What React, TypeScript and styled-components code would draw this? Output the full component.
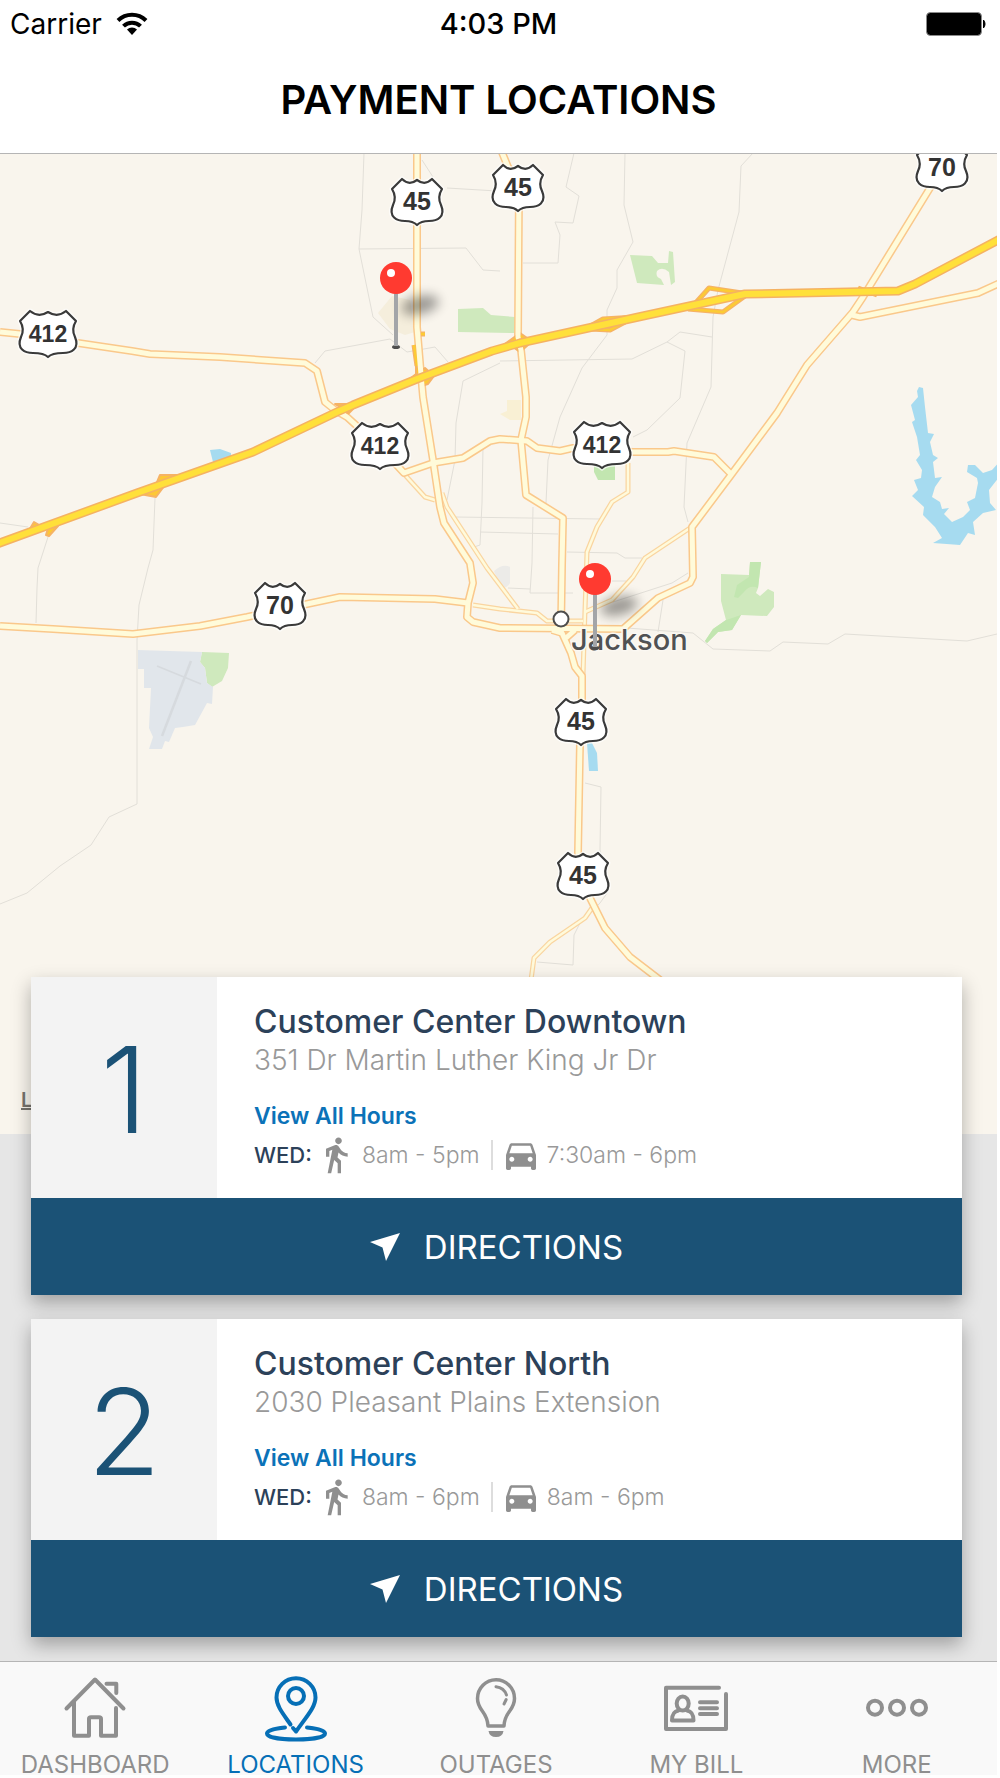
import React from 'react';
import styled, { createGlobalStyle } from 'styled-components';
import { MdDirectionsCar, MdDirectionsWalk } from 'react-icons/md';

const color = {
  navy: '#2c4159',
  brand: '#1b5276',
  link: '#0b72b8',
  muted: '#999999',
  icon: '#8f8f8f',
  hairline: '#b5b5b5',
};

const GlobalStyle = createGlobalStyle`
  *, *::before, *::after { box-sizing: border-box; }
  body {
    margin: 0;
    padding: 0 3px 3px 0;
    background: #ffffff;
    font-family: Inter, Roboto, sans-serif;
  }
`;

const Screen = styled.div`
  display: flex;
  flex-direction: column;
  min-height: calc(100vh - 3px);
  background: #e6e6e6;
`;

const Header = styled.header`
  background: #ffffff;
  border-bottom: 1px solid ${color.hairline};
`;

const StatusBar = styled.div`
  display: grid;
  grid-template-columns: 1fr auto 1fr;
  align-items: center;
  height: 48px;
  padding: 0 10px;
  font-size: 28px;
  line-height: 34px;
  color: #000000;
`;

const Carrier = styled.div`
  display: flex;
  align-items: center;
  gap: 14px;
`;

const Clock = styled.time`
  font-size: 29px;
  font-weight: 500;
`;

const BatterySlot = styled.div`
  display: flex;
  justify-content: flex-end;
`;

const ScreenTitle = styled.h1`
  margin: 0;
  padding: 28px 0 29px;
  font-size: 40px;
  font-weight: 600;
  line-height: 48px;
  text-align: center;
  color: #000000;
`;

const MapArea = styled.section`
  position: relative;
  height: 980px;
  background: #f9f5ed;
`;

const MapCanvas = styled.svg`
  display: block;
  width: 100%;
  height: 100%;
`;

const Legal = styled.a`
  position: absolute;
  left: 21px;
  bottom: 20px;
  font-size: 20px;
  font-weight: 600;
  line-height: 28px;
  color: #76736d;
`;

const CardList = styled.main`
  position: relative;
  display: flex;
  flex-direction: column;
  flex: 1;
  gap: 24px;
  margin-top: -157px;
  padding: 0 35px 24px 31px;
`;

const Card = styled.article`
  background: #ffffff;
  box-shadow: 0 8px 18px rgba(0, 0, 0, 0.3);
`;

const CardBody = styled.div`
  display: grid;
  grid-template-columns: 186px 1fr;
  min-height: 221px;
`;

const CardNumber = styled.div`
  display: flex;
  align-items: center;
  justify-content: center;
  padding-top: 4px;
  background: #f3f3f3;
  color: ${color.brand};
  font-size: 120px;
  font-weight: 300;
  line-height: 148px;
`;

const CardInfo = styled.div`
  display: flex;
  flex-direction: column;
  align-items: flex-start;
  padding: 26px 24px 22px 37px;
`;

const PlaceName = styled.h2`
  margin: 0;
  font-size: 32px;
  font-weight: 500;
  line-height: 38px;
  color: ${color.navy};
`;

const Address = styled.p`
  margin: 0 0 22px;
  font-size: 28px;
  font-weight: 300;
  line-height: 38px;
  color: ${color.muted};
`;

const HoursLink = styled.a`
  margin-bottom: 4px;
  font-size: 23px;
  font-weight: 600;
  line-height: 30px;
  color: ${color.link};
  text-decoration: none;
`;

const HoursRow = styled.div`
  display: flex;
  align-items: center;
  font-size: 23px;
  line-height: 40px;
  color: ${color.muted};
  svg { color: ${color.icon}; flex: none; }
`;

const Day = styled.span`
  margin-right: 4px;
  font-size: 22px;
  font-weight: 500;
  color: ${color.navy};
`;

const Hours = styled.span`
  display: flex;
  align-items: center;
  gap: 6px;
  font-weight: 300;
  & + & {
    margin-left: 11px;
    padding-left: 10px;
    background: linear-gradient(#dddddd, #dddddd) left center / 2px 30px no-repeat;
  }
`;

const DirectionsButton = styled.button`
  display: flex;
  align-items: center;
  justify-content: center;
  gap: 24px;
  width: 100%;
  height: 97px;
  padding: 0;
  border: 0;
  background: ${color.brand};
  color: #ffffff;
  font-family: inherit;
  font-size: 33px;
  font-weight: 400;
  cursor: pointer;
`;

const TabBar = styled.nav`
  position: relative;
  border-top: 1px solid ${color.hairline};
  background: #f9f9f9;
`;

const TabList = styled.div`
  display: grid;
  grid-template-columns: repeat(5, 1fr);
  margin-left: -5px;
`;

const Tab = styled.a<{ $active?: boolean }>`
  display: flex;
  flex-direction: column;
  align-items: center;
  gap: 13px;
  padding-top: 12px;
  font-size: 24px;
  font-weight: 400;
  line-height: 20px;
  text-decoration: none;
  color: ${(p) => (p.$active ? '#066fb6' : color.icon)};
`;

/* ---------- status bar drawings ---------- */

const WifiIcon = () => (
  <svg width="32" height="24" viewBox="0 0 32 24" aria-label="Wi-Fi">
    <g fill="none" stroke="#000" strokeWidth="4">
      <path d="M2 8.5a20 20 0 0 1 28 0" />
      <path d="M7.500 14.200a12 12 0 0 1 17 0" />
    </g>
    <path d="M11 17.500a7.200 7.200 0 0 1 10 0L16 23z" />
  </svg>
);

const BatteryIcon = () => (
  <svg width="61" height="24" viewBox="0 0 61 24" aria-label="Battery full">
    <rect x="0.500" y="0.500" width="55" height="23" rx="4" fill="#000" stroke="#8b8b8b" />
    <path d="M57.500 8a6 6 0 0 1 0 8z" stroke="#000" />
  </svg>
);

const ArrowIcon = () => (
  <svg width="30" height="28" viewBox="0 0 30 28" aria-hidden="true">
    <path d="M30 0L0 9l12.500 5.500L16 28z" fill="#fff" />
  </svg>
);

/* ---------- map ---------- */

const MINOR = [
  'M364 153L362 210L359 249L373 317L393 335',
  'M359 249L466 248L483 270L500 271',
  'M422 160L433 177M447 188L497 191',
  'M315 363L325 351L390 339L407 352L435 347L448 362',
  'M500 363L463 381L456 423L455 460L447 500',
  'M483 447L482 503L480 545L474 547',
  'M455 517L600 519M480 532L558 534',
  'M0 523L28 527',
  'M48 537L38 568L37 588L36 623',
  'M155 498L153 550L148 568L139 605L137 640L137 804L109 817L91 845L60 866L27 893L0 904',
  'M574 153L566 187L579 196L573 223L555 222L560 235L558 263L523 263',
  'M625 153L624 205L633 242L617 270L617 288L607 310L607 335L582 368L560 417L548 460L546 503',
  'M533 507L532 563L530 593L573 593',
  'M753 153L741 166L739 212L718 290L713 317L711 387L687 443L684 507L688 522',
  'M500 361L632 359L667 342L680 332L712 337',
  'M667 342L685 351L680 398L647 430L633 437',
  'M567 552L617 553L625 558L642 558M508 588L530 589M612 581L626 581',
  'M613 602L672 583L688 573M663 600L658 632',
  'M627 628L693 633L713 649L770 651L783 642L828 644L845 634L967 641L997 634',
  'M585 783L601 787L600 850L608 880V892L600 903L579 925L574 935L573 965L537 962',
];

const THIN_ROADS = [
  'M405 475L425 497L435 500',
  'M442 493L447 507L487 568L518 609',
  'M473 605L500 609L537 613L547 621L583 621',
  'M628 463L628 492L612 502L597 527L587 552L585 610L583 675',
  'M690 528L645 558L633 577L612 600L585 612',
  'M592 908L585 918L550 942L534 958L531 980',
];

const ROADS = [
  'M0 332L20 334L78 343L132 351L150 354L220 357L305 363L317 371L325 402L335 410L347 417L380 447L404 473L433 463L463 458L490 441L500 439L527 441L537 448L560 451L573 448L633 452L668 452L674 451L714 457L731 474',
  'M417 150L417 327L420 363L423 397L433 460L440 507L444 523L470 563L473 583L468 603L467 617L473 622L500 628L623 629L658 598L690 583L693 577L692 527L731 475L777 413L807 365L853 312L863 297L930 188L942 170',
  'M852 315L860 317L978 293L1000 283',
  'M501 150L508 167L519 187L518 337L521 350L526 397L526 417L521 440L526 495L563 518L562 565L561 629',
  'M552 630L562 633L571 653L575 667L582 676L582 700L580 743L578 853L590 898L605 928L630 957L660 980',
  'M575 630L566 638',
  'M0 626L53 629L133 634L200 626L247 617L307 604L340 597L435 599L468 603',
];

/* interchanges drawn as solid blocks, and those drawn as open ramps */
const JUNCTIONS = [
  'M28 532L34 522L41 526ZM46 535L49 536L58 526L50 522Z',
  'M155 487L160 475L180 475ZM140 494L156 497L165 485Z',
  'M335 404L357 404L345 410ZM347 415L357 405L347 408Z',
  'M405 383L416 374V360L421 376ZM421 386L428 384L434 376L425 368L418 374Z',
  'M502 346L520 333L530 340ZM513 347L520 352L528 345Z',
];

const RAMPS = [
  'M421 334H425M414 345L417 366',
  'M587 328L603 319L637 317M590 329L610 330L625 322',
  'M693 306L709 288L742 293M688 309L723 312L745 296',
  'M858 288L877 295',
];

const HIGHWAY =
  'M-3 544L137 493L253 452L337 412L353 405L417 379L492 351L520 343L643 316L745 294L898 291L915 284L1000 239';

const LAKE =
  'M919 387L923 388L925 407L928 433L934 434L930 442L933 455L938 458L933 462L935 478L942 477L935 487L932 497L940 502L942 509L949 508L944 514L952 522L963 517L970 510L967 502L975 498L978 483L977 478L967 472L968 465L975 465L983 473L992 470L1000 461V476L989 490L990 503L996 510L983 513L973 522L975 535L968 533L960 545L933 543L942 538L935 527L923 515L924 507L912 496L918 490L914 480L921 478L922 470L916 460L920 455L917 437L912 422L915 420L911 405L918 397L917 391Z';

const SHIELDS = [
  { x: 417, y: 178, route: '45' },
  { x: 518, y: 164, route: '45' },
  { x: 942, y: 144, route: '70' },
  { x: 48, y: 310, route: '412' },
  { x: 380, y: 422, route: '412' },
  { x: 602, y: 421, route: '412' },
  { x: 280, y: 582, route: '70' },
  { x: 581, y: 698, route: '45' },
  { x: 583, y: 852, route: '45' },
];

const Shield = ({ x, y, route }: { x: number; y: number; route: string }) => {
  const wide = route.length > 2;
  const s = wide ? 3 : 0;
  const d =
    `M${-15 - s} 1Q${-8 - s / 2} 8 0 2Q${8 + s / 2} 8 ${15 + s} 1L${25 + s} 11` +
    `Q${20 + s} 19 ${24 + s} 27C${29 + s} 39 ${20 + s} 43 ${12 + s} 43Q4 43 0 47` +
    `Q-4 43 ${-12 - s} 43C${-20 - s} 43 ${-29 - s} 39 ${-24 - s} 27Q${-20 - s} 19 ${-25 - s} 11Z`;
  return (
    <g transform={`translate(${x} ${y})`}>
      <path d={d} fill="#fff" stroke="#fff" strokeWidth="5" strokeLinejoin="round" opacity="0.700" />
      <path d={d} fill="#fff" stroke="#3a3a3a" strokeWidth="2.200" strokeLinejoin="round" />
      <text
        y="32"
        textAnchor="middle"
        fontFamily="'Liberation Sans', Arial, sans-serif"
        fontWeight="700"
        fontSize={wide ? 23 : 25}
        fill="#333"
      >
        {route}
      </text>
    </g>
  );
};

const Pin = ({ x, y }: { x: number; y: number }) => (
  <g transform={`translate(${x} ${y})`}>
    <ellipse cx="24" cy="27" rx="19" ry="9" transform="rotate(-14 24 27)" fill="#000" opacity="0.380" filter="url(#soft)" />
    <ellipse cy="69" rx="4" ry="2" fill="#4d4d4d" />
    <path d="M0 14V68" stroke="#a3a5a8" strokeWidth="4" />
    <circle r="16" fill="#ff3a30" />
    <circle cx="-5" cy="-5" r="4" fill="#fff" />
  </g>
);

const LocationsMap = () => (
  <MapCanvas viewBox="0 154 997 980" preserveAspectRatio="xMidYMin slice" role="img" aria-label="Map of Jackson">
    <defs>
      <filter id="soft" x="-60%" y="-120%" width="220%" height="340%">
        <feGaussianBlur stdDeviation="6" />
      </filter>
    </defs>
    <g fill="#f5eedc">
      <path d="M378 313L392 296L410 300L415 332L405 335L390 329Z" />
      <path d="M507 400H521V420H510L500 414L507 411Z" fill="#f9f0d4" />
      <path d="M494 571Q503 563 510 567V583Q506 590 500 586Z" fill="#ecebe8" />
    </g>
    <g fill="#cfe9bd">
      <path d="M458 309L483 308L491 315L515 317V333L458 332Z" />
      <path d="M630 255L652 256L658 263L668 263L669 251L673 252L675 282L671 285L669 272Q662 266 657 271Q655 277 661 279L664 285L637 283Z" />
      <path d="M721 574L749 575L750 562H761L758 588L756 593L760 596L768 589L774 592V607L767 616L741 615L732 630L718 632L707 643L705 641L713 629L726 620L721 601Z" />
      <path d="M202 652L229 653L228 668L222 681L212 687L207 683L205 668L200 662Z" />
    </g>
    <g fill="#c2e6b0">
      <path d="M594 465H615V480H598L594 472Z" />
      <path d="M750 562H761L758 588Q750 584 744 592L738 598L734 597L737 585L749 577Z" />
      <path d="M741 615L732 630L718 632L707 643L705 641L713 629L726 620Z" />
    </g>
    <path
      d="M138 650L202 652L200 662L205 668L207 683L213 687L212 704L207 703L195 725L183 727L175 728L169 742L165 741L162 749H149L153 737L149 728L151 688H144V669H138Z"
      fill="#e1e6eb"
    />
    <path d="M157 666L201 684" stroke="#d6dade" strokeWidth="1.500" />
    <path d="M191 661L162 736" stroke="#d6dade" strokeWidth="2.500" />
    <g fill="#a6dbf0">
      <path d="M210 450L220 449L231 453V457L213 462Z" />
      <path d="M587 743H592L597 753L598 771H589Z" />
      <path d={LAKE} />
    </g>
    <g fill="none" stroke="#e2dfd8" strokeWidth="1">
      {MINOR.map((d) => <path key={d} d={d} />)}
    </g>
    <g fill="none" strokeLinejoin="round">
      {THIN_ROADS.map((d) => <path key={d} d={d} stroke="#fad5a0" strokeWidth="5" />)}
      {THIN_ROADS.map((d) => <path key={d + 'f'} d={d} stroke="#fffadb" strokeWidth="2.500" />)}
      {ROADS.map((d) => <path key={d} d={d} stroke="#fac88b" strokeWidth="8" />)}
      {JUNCTIONS.map((d) => <path key={d} d={d} fill="#fdc835" stroke="#f6b365" strokeWidth="2" />)}
      {RAMPS.map((d) => <path key={d} d={d} stroke="#f6b365" strokeWidth="5" />)}
      {RAMPS.map((d) => <path key={d + 'f'} d={d} stroke="#fccb34" strokeWidth="2.500" />)}
      {ROADS.map((d) => <path key={d + 'f'} d={d} stroke="#fffbda" strokeWidth="5" />)}
      <path d={HIGHWAY} stroke="#f5b262" strokeWidth="9" />
      <path d={HIGHWAY} stroke="#ffe03a" strokeWidth="6" />
    </g>
    <circle cx="561" cy="619" r="7.500" fill="#fff" stroke="#4d4d4d" strokeWidth="2" />
    <text
      x="571"
      y="650"
      fontFamily="Inter, sans-serif"
      fontSize="29"
      fontWeight="500"
      fill="#505153"
      stroke="#fbf8f2"
      strokeWidth="3"
      paintOrder="stroke"
    >
      Jackson
    </text>
    {SHIELDS.map((s) => <Shield key={`${s.x}-${s.y}`} {...s} />)}
    <Pin x={396} y={278} />
    <Pin x={595} y={579} />
  </MapCanvas>
);

/* ---------- tab icons ---------- */

const TabIcon = ({ children }: { children: React.ReactNode }) => (
  <svg
    width="64"
    height="68"
    viewBox="0 0 64 68"
    fill="none"
    stroke="currentColor"
    strokeWidth="4"
    strokeLinecap="round"
    strokeLinejoin="round"
    aria-hidden="true"
  >
    {children}
  </svg>
);

const HomeIcon = () => (
  <TabIcon>
    <path d="M3.500 34.500L32 5.500L60.500 34.500" />
    <path d="M43.500 9.700H53.300V19" />
    <path d="M11 28V61.700H26V45Q26 43.300 28 43.300H36Q38 43.300 38 45V61.700H53V34" />
  </TabIcon>
);

const PlaceIcon = () => (
  <TabIcon>
    <path d="M26.500 50.500C20 41 12.500 32.500 12.500 23.500A19.500 19.200 0 0 1 51.500 23.500C51.500 33 43 42 32 57.500L29 54" />
    <circle cx="32" cy="22" r="8" />
    <path d="M21 53.500C10 54.500 3 56.500 3 59.500C3 63 15 65.500 32 65.500S61 63 61 59.500C61 56.500 54 54.500 43 53.500" />
  </TabIcon>
);

const BulbIcon = () => (
  <TabIcon>
    <path d="M24 52C23.500 37 13.500 37 13.500 24.500A18.500 18.800 0 0 1 50.500 24.500C50.500 37 40.500 37 40 52Z" strokeWidth="3.500" />
    <path d="M32 12.700Q40 13.500 42.500 21M42.200 25.500L40 30" strokeWidth="3" />
    <path d="M24.500 57H39.500Q38.500 63 32 63T24.500 57Z" fill="currentColor" stroke="none" />
  </TabIcon>
);

const BillIcon = () => (
  <TabIcon>
    <path d="M55 13.700H2V55H62V20" />
    <ellipse cx="18.700" cy="29.500" rx="6" ry="7" />
    <path d="M14.500 36.500C10 37.500 8 40 8 46.500H29.500C29.500 40 27.500 37.500 23 36.500" />
    <path d="M36 28.300H53M36 34.300H53M36 40H53" />
  </TabIcon>
);

const MoreIcon = () => (
  <TabIcon>
    <circle cx="10" cy="33.700" r="7" />
    <circle cx="32" cy="33.700" r="7" />
    <circle cx="54" cy="33.700" r="7" />
  </TabIcon>
);

const TABS = [
  { label: 'DASHBOARD', Icon: HomeIcon },
  { label: 'LOCATIONS', Icon: PlaceIcon, active: true },
  { label: 'OUTAGES', Icon: BulbIcon },
  { label: 'MY BILL', Icon: BillIcon },
  { label: 'MORE', Icon: MoreIcon },
];

const PLACES = [
  { name: 'Customer Center Downtown', address: '351 Dr Martin Luther King Jr Dr', walk: '8am - 5pm', drive: '7:30am - 6pm' },
  { name: 'Customer Center North', address: '2030 Pleasant Plains Extension', walk: '8am - 6pm', drive: '8am - 6pm' },
];

export default function App() {
  return (
    <>
      <GlobalStyle />
      <Screen>
        <Header>
          <StatusBar>
            <Carrier>
              Carrier
              <WifiIcon />
            </Carrier>
            <Clock>4:03 PM</Clock>
            <BatterySlot>
              <BatteryIcon />
            </BatterySlot>
          </StatusBar>
          <ScreenTitle>PAYMENT LOCATIONS</ScreenTitle>
        </Header>
        <MapArea>
          <LocationsMap />
          <Legal href="#legal">Legal</Legal>
        </MapArea>
        <CardList>
          {PLACES.map((place, i) => (
            <Card key={place.name}>
              <CardBody>
                <CardNumber>{i + 1}</CardNumber>
                <CardInfo>
                  <PlaceName>{place.name}</PlaceName>
                  <Address>{place.address}</Address>
                  <HoursLink href="#hours">View All Hours</HoursLink>
                  <HoursRow>
                    <Day>WED:</Day>
                    <Hours>
                      <MdDirectionsWalk size={40} aria-label="Lobby" />
                      {place.walk}
                    </Hours>
                    <Hours>
                      <MdDirectionsCar size={40} aria-label="Drive-through" />
                      {place.drive}
                    </Hours>
                  </HoursRow>
                </CardInfo>
              </CardBody>
              <DirectionsButton type="button">
                <ArrowIcon />
                DIRECTIONS
              </DirectionsButton>
            </Card>
          ))}
        </CardList>
        <TabBar>
          <TabList>
            {TABS.map(({ label, Icon, active }) => (
              <Tab key={label} href={`#${label.toLowerCase().replace(' ', '-')}`} $active={active} aria-current={active ? 'page' : undefined}>
                <Icon />
                {label}
              </Tab>
            ))}
          </TabList>
        </TabBar>
      </Screen>
    </>
  );
}
